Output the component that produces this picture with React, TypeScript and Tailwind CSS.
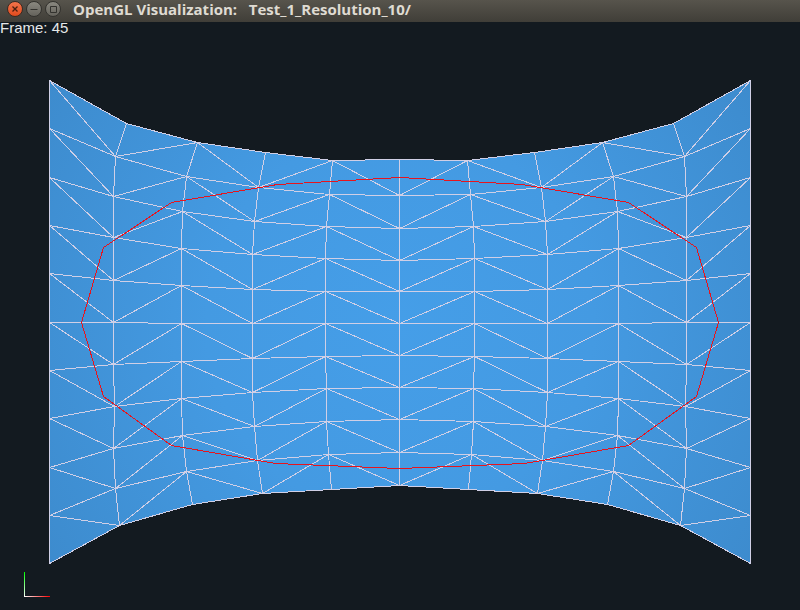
import React from "react";

type Point = [number, number];

// Left half of the mesh, one array of vertices per column; the right half mirrors it.
const leftColumns: Point[][] = [
  [[49, 80], [49, 128], [49, 177], [49, 225], [49, 273], [49, 322], [49, 370], [49, 418], [49, 467], [49, 515], [49, 563]],
  [[126, 123], [115, 156], [113, 196], [113, 237], [113, 280], [113, 322], [113, 364], [114, 406], [113, 448], [115, 488], [119, 525]],
  [[197, 142], [186, 176], [182, 211], [181, 248], [181, 285], [181, 323], [181, 361], [181, 398], [182, 435], [186, 471], [192, 504]],
  [[265, 152], [258, 187], [254, 221], [252, 254], [252, 289], [252, 323], [252, 358], [252, 392], [254, 426], [257, 460], [262, 493]],
  [[332, 160], [329, 194], [326, 226], [325, 258], [325, 291], [325, 323], [325, 356], [326, 388], [326, 421], [328, 454], [331, 489]],
  [[399, 159], [399, 195], [399, 228], [399, 260], [399, 291], [399, 323], [399, 355], [399, 387], [399, 419], [399, 452], [399, 485]],
];

const mirror = ([x, y]: Point): Point => [799 - x, y];
const columns: Point[][] = [
  ...leftColumns,
  ...leftColumns.slice(0, 5).reverse().map((column) => column.map(mirror)),
];

const leftContour: Point[] = [
  [399, 177], [277, 184], [171, 202], [103, 247], [81, 322], [103, 396], [171, 445], [275, 463], [399, 468],
];
const contour: Point[] = [...leftContour, ...leftContour.slice(1, -1).reverse().map(mirror)];

// Vertices sit at pixel centres; the view starts below the 22px title bar.
const at = ([x, y]: Point) => `${x + 0.5} ${y - 21.5}`;
const line = (points: Point[]) => `M${points.map(at).join("L")}`;

const outline = `${line([
  ...columns.map((column) => column[0]),
  ...columns.map((column) => column[10]).reverse(),
])}Z`;

// The diagonals alternate from column to column and mirror about the middle.
const diagonals = columns.slice(0, -1).flatMap((column, c) => {
  const next = columns[c + 1];
  const falls = c % 2 === 0;
  return column
    .slice(0, -1)
    .map((_, r) => (falls ? line([column[r], next[r + 1]]) : line([column[r + 1], next[r]])));
});

const wires = [
  ...columns.map(line),
  ...columns[0].map((_, r) => line(columns.map((column) => column[r]))),
  ...diagonals,
].join("");

function TitleBar() {
  const round =
    "flex size-4 items-center justify-center rounded-full border border-[#33322e] bg-linear-to-b from-[#8a8880] to-[#65635c] text-[#33322e]";
  return (
    <header className="flex h-[22px] items-center bg-linear-to-b from-[#57544c] to-[#403e38] pb-1 pl-[7px]">
      <div className="flex gap-[3px]">
        <button
          aria-label="Close"
          className="flex size-4 items-center justify-center rounded-full border border-[#3b2a22] bg-linear-to-b from-[#f4744a] to-[#df4a1c] text-[#4a2010]"
        >
          <svg viewBox="0 0 14 14" className="size-3.5 shrink-0" fill="none" stroke="currentColor" strokeWidth="1.3">
            <path d="M4.5 4.5l5 5M9.5 4.5l-5 5" />
          </svg>
        </button>
        <button aria-label="Minimize" className={round}>
          <svg viewBox="0 0 14 14" className="size-3.5 shrink-0" fill="none" stroke="currentColor">
            <path d="M3.5 7.5h7" />
          </svg>
        </button>
        <button aria-label="Maximize" className={round}>
          <svg viewBox="0 0 14 14" className="size-3.5 shrink-0" fill="none" stroke="currentColor">
            <path d="M4.5 4.5h6v6h-6z" />
          </svg>
        </button>
      </div>
      <h1 className="ml-3 font-['Open_Sans','Noto_Sans',sans-serif] text-[15px] leading-4 font-bold whitespace-pre text-[#dfdbd2]">
        {"OpenGL Visualization:   Test_1_Resolution_10/"}
      </h1>
    </header>
  );
}

export default function App() {
  return (
    <div className="flex min-h-screen flex-col bg-[#131a20]">
      <TitleBar />
      <main className="relative flex-1">
        <svg viewBox="0 0 800 588" className="block w-full" shapeRendering="crispEdges" role="img" aria-label="Deformed mesh">
          <defs>
            <radialGradient id="light" gradientUnits="userSpaceOnUse" cx="400" cy="301" r="430">
              <stop offset="0" stopColor="#459ee8" />
              <stop offset="0.45" stopColor="#449ae2" />
              <stop offset="1" stopColor="#3d8bcd" />
            </radialGradient>
            <linearGradient id="axisX" gradientUnits="userSpaceOnUse" x1="24" y1="0" x2="50" y2="0">
              <stop offset="0" stopColor="#fff" />
              <stop offset="1" stopColor="#f00" />
            </linearGradient>
            <linearGradient id="axisY" gradientUnits="userSpaceOnUse" x1="0" y1="575" x2="0" y2="550">
              <stop offset="0" stopColor="#fff" />
              <stop offset="1" stopColor="#0f0" />
            </linearGradient>
          </defs>
          <path d={outline} fill="url(#light)" />
          <path d={wires} fill="none" stroke="#d0cfe6" />
          <path d={`${line(contour)}Z`} fill="none" stroke="#e8141c" />
          <rect x="24" y="550" width="1" height="25" fill="url(#axisY)" />
          <rect x="24" y="574" width="26" height="1" fill="url(#axisX)" />
        </svg>
        <p className="absolute top-0 left-0 font-['Liberation_Sans',Arial,sans-serif] text-[15px] leading-3 text-[#e6e8e9]">
          Frame: 45
        </p>
      </main>
    </div>
  );
}
